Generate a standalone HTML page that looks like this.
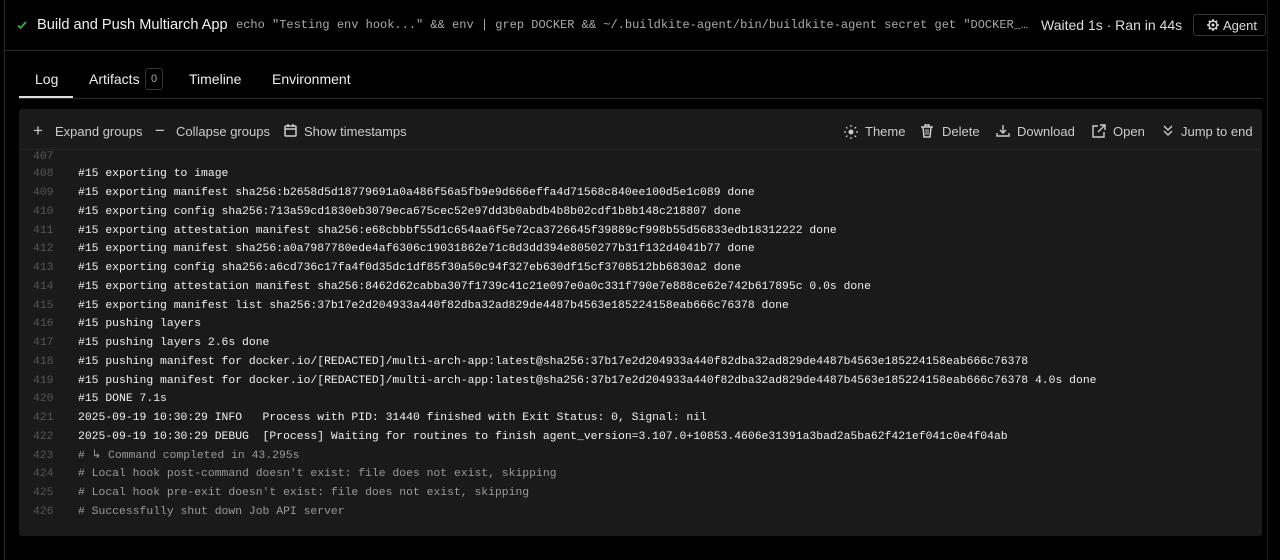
<!DOCTYPE html>
<html><head><style>
*{margin:0;padding:0;box-sizing:border-box}
body{width:1280px;height:552px;background:#000;overflow:hidden;font-family:"Liberation Sans",sans-serif;color:#eee;position:relative}
.outer{position:absolute;left:4px;top:0;width:1264px;height:560px;border-left:1px solid #2a2a2a;border-right:1px solid #1a1a1a}
.hdr{position:absolute;top:0;left:0;right:0;height:51px;border-bottom:1px solid #2c2c2c}
.title{position:absolute;left:37px;top:17px;font-size:14.6px;color:#f2f2f2;white-space:nowrap}
.cmd{position:absolute;left:236px;top:18px;width:796px;overflow:hidden;font-family:"Liberation Mono",monospace;font-size:12px;color:#aaa;white-space:nowrap}
.wait{position:absolute;left:1041px;top:17px;font-size:14px;color:#ddd;white-space:nowrap}
.agent{position:absolute;left:1193px;top:14px;width:73px;height:22px;border:1px solid #333;border-radius:3px;font-size:13px;color:#ddd;padding:3px 0 0 29px;background:#000}
.tabs{position:absolute;left:19px;top:70px;width:1243px;height:29px;border-bottom:1px solid #2c2c2c;font-size:14px}
.tabs span{position:absolute;top:1px}
.panel{position:absolute;left:19px;top:109px;width:1243px;height:427px;background:#1a1a1a;border-radius:3px}
.tb{height:41px;border-bottom:1px solid #262626;font-size:13px;color:#ccc;position:relative}
.tb span{position:absolute;top:15px;white-space:nowrap}
.ln{position:absolute;left:0;font-family:"Liberation Mono",monospace;font-size:11.4px;line-height:14px;white-space:pre}
.ln b{position:absolute;left:14px;width:20px;color:#555;font-weight:normal}
.ln i{position:absolute;left:59px;font-style:normal;color:#f0f0f0}
.ln i.g{color:#9a9a9a}
</style></head><body>
<div class="outer">
<div class="hdr"></div>
</div>
<svg style="position:absolute;left:16px;top:19px" width="12" height="12" viewBox="0 0 12 12"><path d="M2 6.5l2.5 2.5L10 3" stroke="#3cb043" stroke-width="1.8" fill="none"/></svg>
<div class="title">Build and Push Multiarch App</div>
<div class="cmd">echo "Testing env hook..." &amp;&amp; env | grep DOCKER &amp;&amp; ~/.buildkite-agent/bin/buildkite-agent secret get "DOCKER_…</div>
<div class="wait">Waited 1s · Ran in 44s</div>
<div class="agent">Agent</div>
<svg style="position:absolute;left:1206px;top:18px" width="14" height="14" viewBox="0 0 14 14"><circle cx="7" cy="7" r="4" stroke="#ddd" stroke-width="1.4" fill="none"/><circle cx="7" cy="7" r="1.5" fill="#ddd"/><path d="M7 1v2M7 11v2M1 7h2M11 7h2M2.8 2.8l1.4 1.4M9.8 9.8l1.4 1.4M2.8 11.2l1.4-1.4M9.8 4.2l1.4-1.4" stroke="#ddd" stroke-width="1.4"/></svg>
<div class="tabs">
<span style="left:16px">Log</span>
<div style="position:absolute;left:0;top:26px;width:54px;height:2px;background:#ddd"></div>
<span style="left:70px">Artifacts</span>
<div style="position:absolute;left:126px;top:-2px;width:18px;height:22px;border:1px solid #333;border-radius:3px;font-size:11px;color:#aaa;text-align:center;padding-top:4px">0</div>
<span style="left:170px">Timeline</span>
<span style="left:253px">Environment</span>
</div>
<div class="panel">
<div class="tb">
<span style="left:14px;top:12px;font-size:17px">+</span><span style="left:36px">Expand groups</span>
<span style="left:136px;top:12px;font-size:17px">−</span><span style="left:157px">Collapse groups</span>
<svg style="position:absolute;left:265px;top:15px" width="13" height="13" viewBox="0 0 13 13"><rect x="1" y="2" width="11" height="10" rx="1" stroke="#ccc" stroke-width="1.5" fill="none"/><path d="M1 5h11M4 0v3M9 0v3" stroke="#ccc" stroke-width="1.5"/></svg>
<span style="left:285px">Show timestamps</span>
<svg style="position:absolute;left:825px;top:16px" width="14" height="14" viewBox="0 0 14 14"><circle cx="7" cy="7" r="2.5" fill="#ccc"/><path d="M7 0v2M7 12v2M0 7h2M12 7h2M2 2l1.4 1.4M10.6 10.6L12 12M2 12l1.4-1.4M10.6 3.4L12 2" stroke="#ccc" stroke-width="1.2"/></svg>
<span style="left:846px">Theme</span>
<svg style="position:absolute;left:902px;top:15px" width="12" height="14" viewBox="0 0 12 14"><path d="M0 3h12M4 3V1h4v2M2 3l1 10h6l1-10" stroke="#ccc" stroke-width="1.5" fill="none"/><path d="M5 5v6M7 5v6" stroke="#ccc"/></svg>
<span style="left:923px">Delete</span>
<svg style="position:absolute;left:977px;top:15px" width="14" height="14" viewBox="0 0 14 14"><path d="M7 1v8M4 6l3 3 3-3M1 9v3h12V9" stroke="#ccc" stroke-width="1.4" fill="none"/></svg>
<span style="left:998px">Download</span>
<svg style="position:absolute;left:1073px;top:15px" width="14" height="14" viewBox="0 0 14 14"><path d="M6 2H1v11h11V8M8 1h5v5M13 1L6 8" stroke="#ccc" stroke-width="1.4" fill="none"/></svg>
<span style="left:1094px">Open</span>
<svg style="position:absolute;left:1144px;top:16px" width="10" height="12" viewBox="0 0 10 12"><path d="M1 1l4 4 4-4M1 6l4 4 4-4" stroke="#ccc" stroke-width="1.4" fill="none"/></svg>
<span style="left:1162px">Jump to end</span>
</div>
<div class="ln" style="top:41px"><b>407</b></div>
<div class="ln" style="top:58px"><b>408</b><i>#15 exporting to image</i></div>
<div class="ln" style="top:77px"><b>409</b><i>#15 exporting manifest sha256:b2658d5d18779691a0a486f56a5fb9e9d666effa4d71568c840ee100d5e1c089 done</i></div>
<div class="ln" style="top:96px"><b>410</b><i>#15 exporting config sha256:713a59cd1830eb3079eca675cec52e97dd3b0abdb4b8b02cdf1b8b148c218807 done</i></div>
<div class="ln" style="top:115px"><b>411</b><i>#15 exporting attestation manifest sha256:e68cbbbf55d1c654aa6f5e72ca3726645f39889cf998b55d56833edb18312222 done</i></div>
<div class="ln" style="top:133px"><b>412</b><i>#15 exporting manifest sha256:a0a7987780ede4af6306c19031862e71c8d3dd394e8050277b31f132d4041b77 done</i></div>
<div class="ln" style="top:152px"><b>413</b><i>#15 exporting config sha256:a6cd736c17fa4f0d35dc1df85f30a50c94f327eb630df15cf3708512bb6830a2 done</i></div>
<div class="ln" style="top:171px"><b>414</b><i>#15 exporting attestation manifest sha256:8462d62cabba307f1739c41c21e097e0a0c331f790e7e888ce62e742b617895c 0.0s done</i></div>
<div class="ln" style="top:190px"><b>415</b><i>#15 exporting manifest list sha256:37b17e2d204933a440f82dba32ad829de4487b4563e185224158eab666c76378 done</i></div>
<div class="ln" style="top:208px"><b>416</b><i>#15 pushing layers</i></div>
<div class="ln" style="top:227px"><b>417</b><i>#15 pushing layers 2.6s done</i></div>
<div class="ln" style="top:246px"><b>418</b><i>#15 pushing manifest for docker.io/[REDACTED]/multi-arch-app:latest@sha256:37b17e2d204933a440f82dba32ad829de4487b4563e185224158eab666c76378</i></div>
<div class="ln" style="top:265px"><b>419</b><i>#15 pushing manifest for docker.io/[REDACTED]/multi-arch-app:latest@sha256:37b17e2d204933a440f82dba32ad829de4487b4563e185224158eab666c76378 4.0s done</i></div>
<div class="ln" style="top:283px"><b>420</b><i>#15 DONE 7.1s</i></div>
<div class="ln" style="top:302px"><b>421</b><i>2025-09-19 10:30:29 INFO   Process with PID: 31440 finished with Exit Status: 0, Signal: nil</i></div>
<div class="ln" style="top:321px"><b>422</b><i>2025-09-19 10:30:29 DEBUG  [Process] Waiting for routines to finish agent_version=3.107.0+10853.4606e31391a3bad2a5ba62f421ef041c0e4f04ab</i></div>
<div class="ln" style="top:340px"><b>423</b><i class="g"># ↳ Command completed in 43.295s</i></div>
<div class="ln" style="top:358px"><b>424</b><i class="g"># Local hook post-command doesn't exist: file does not exist, skipping</i></div>
<div class="ln" style="top:377px"><b>425</b><i class="g"># Local hook pre-exit doesn't exist: file does not exist, skipping</i></div>
<div class="ln" style="top:396px"><b>426</b><i class="g"># Successfully shut down Job API server</i></div>
</div>
</body></html>
